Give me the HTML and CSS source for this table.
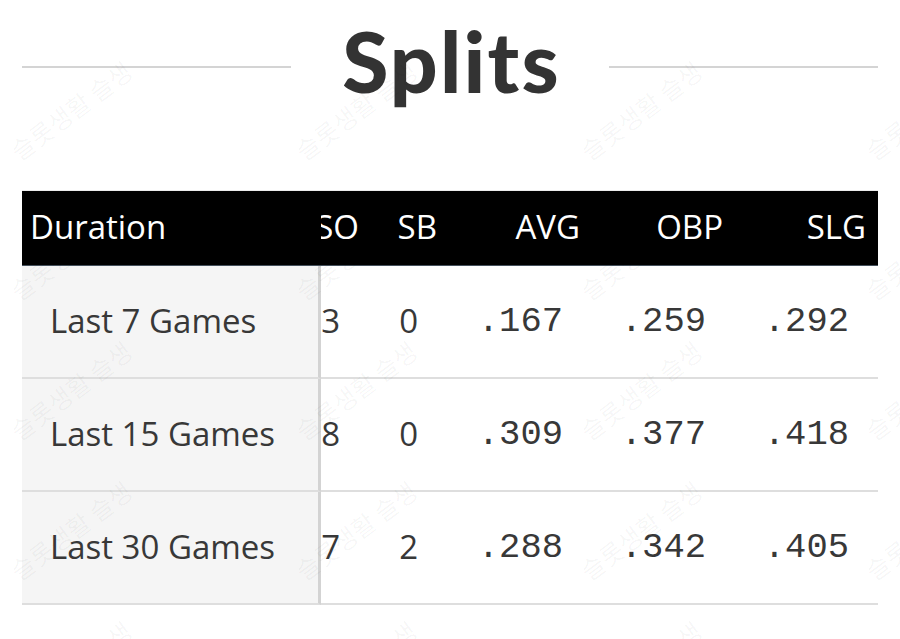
FILE: index.html
```html
<!DOCTYPE html>
<html lang="en">
<head>
<meta charset="utf-8">
<title>Splits</title>
<link rel="stylesheet" href="styles.css">
</head>
<body>
<main class="page">
  <div class="title-row">
    <span class="rule"></span>
    <h2 class="title">Splits</h2>
    <span class="rule"></span>
  </div>

  <section class="splits">
    <div class="frozen">
      <div class="hcell hcell-label">Duration</div>
      <div class="label">Last 7 Games</div>
      <div class="label">Last 15 Games</div>
      <div class="label">Last 30 Games</div>
    </div>
    <div class="scroller">
      <div class="cols">
        <div class="hcell">SO</div>
        <div class="hcell">SB</div>
        <div class="hcell">AVG</div>
        <div class="hcell">OBP</div>
        <div class="hcell">SLG</div>

        <div class="cell">3</div>
        <div class="cell">0</div>
        <div class="cell mono">.167</div>
        <div class="cell mono">.259</div>
        <div class="cell mono">.292</div>

        <div class="cell">8</div>
        <div class="cell">0</div>
        <div class="cell mono">.309</div>
        <div class="cell mono">.377</div>
        <div class="cell mono">.418</div>

        <div class="cell">7</div>
        <div class="cell">2</div>
        <div class="cell mono">.288</div>
        <div class="cell mono">.342</div>
        <div class="cell mono">.405</div>
      </div>
    </div>
  </section>
</main>

<div class="watermark" aria-hidden="true">
  <div class="wm-grid">
    <span>슬롯생활 슬생</span><span>슬롯생활 슬생</span><span>슬롯생활 슬생</span><span>슬롯생활 슬생</span>
    <span>슬롯생활 슬생</span><span>슬롯생활 슬생</span><span>슬롯생활 슬생</span><span>슬롯생활 슬생</span>
    <span>슬롯생활 슬생</span><span>슬롯생활 슬생</span><span>슬롯생활 슬생</span><span>슬롯생활 슬생</span>
    <span>슬롯생활 슬생</span><span>슬롯생활 슬생</span><span>슬롯생활 슬생</span><span>슬롯생활 슬생</span>
    <span>슬롯생활 슬생</span><span>슬롯생활 슬생</span><span>슬롯생활 슬생</span><span>슬롯생활 슬생</span>
  </div>
</div>
</body>
</html>
```

FILE: styles.css
```css
html, body {
  margin: 0;
  padding: 0;
  background: #ffffff;
  overflow: hidden;
}

body {
  font-family: "Open Sans", "Liberation Sans", sans-serif;
  color: #333333;
  position: relative;
  width: 900px;
  height: 639px;
}

.page {
  padding: 0 22px;
}

/* Title with side rules */
.title-row {
  display: flex;
  align-items: flex-start;
  padding-top: 19px;
}

.rule {
  flex: 1;
  height: 2px;
  background: #d4d4d4;
  margin-top: 47px;
}

.title {
  margin: 0 48px 0 51px;
  font-family: "Lato", "Open Sans", sans-serif;
  font-size: 84px;
  line-height: 83px;
  font-weight: 900;
  color: #333333;
  letter-spacing: 2.2px;
}

/* Table */
.splits {
  display: flex;
  margin-top: 88px;
  border-top: 1px solid #ececec;
}

.frozen {
  width: 299px;
  flex: none;
  display: flex;
  flex-direction: column;
}

.hcell {
  height: 74px;
  box-sizing: border-box;
  height: 75px;
  padding-bottom: 3px;
  background: #000000;
  color: #ffffff;
  border-bottom: 1px solid #44505c;
  font-size: 33px;
  display: flex;
  align-items: center;
  justify-content: flex-end;
  padding-right: 12px;
  white-space: nowrap;
}

.hcell-label {
  justify-content: flex-start;
  padding-left: 8px;
  padding-right: 0;
}

.label {
  box-sizing: border-box;
  height: 113px;
  padding-bottom: 3px;
  background: #f5f5f5;
  border-right: 3px solid #d3d3d3;
  border-bottom: 2px solid #dedede;
  font-size: 33px;
  color: #383838;
  display: flex;
  align-items: center;
  padding-left: 28px;
  white-space: nowrap;
}

.scroller {
  flex: 1;
  min-width: 0;
  overflow: hidden;
  display: flex;
  justify-content: flex-end;
}

.cols {
  flex: none;
  display: grid;
  grid-template-columns: 78px 78px 143px 143px 143px;
}

.cell {
  box-sizing: border-box;
  height: 113px;
  padding-bottom: 3px;
  border-bottom: 2px solid #dedede;
  font-size: 33px;
  color: #383838;
  display: flex;
  align-items: center;
  justify-content: flex-end;
  padding-right: 31px;
  white-space: nowrap;
}

.mono {
  font-family: "Liberation Mono", "DejaVu Sans Mono", monospace;
  font-size: 35.5px;
  padding-right: 29px;
  padding-bottom: 1px;
}

/* Watermark overlay */
.watermark {
  position: absolute;
  inset: 0;
  overflow: hidden;
  pointer-events: none;
}

.wm-grid {
  position: absolute;
  top: 40px;
  left: -72px;
  display: grid;
  grid-template-columns: repeat(4, 285px);
  grid-auto-rows: 140px;
}

.wm-grid span {
  display: flex;
  align-items: center;
  justify-content: center;
  font-family: "Noto Sans CJK KR", sans-serif;
  font-size: 25px;
  color: rgba(0, 0, 0, 0.04);
  transform: rotate(-37deg);
  white-space: nowrap;
}
```
